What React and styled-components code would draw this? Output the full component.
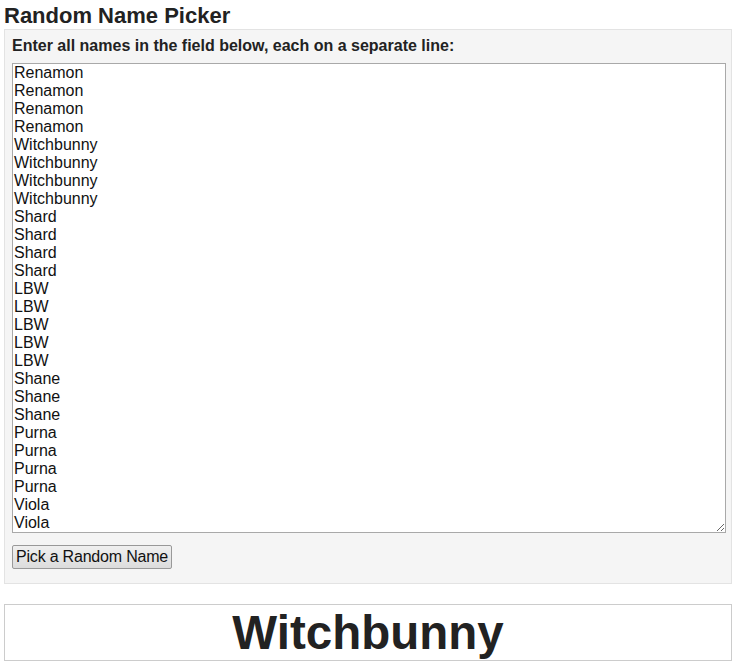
import React from 'react';
import styled, { createGlobalStyle } from 'styled-components';

const names = [
  'Renamon', 'Renamon', 'Renamon', 'Renamon',
  'Witchbunny', 'Witchbunny', 'Witchbunny', 'Witchbunny',
  'Shard', 'Shard', 'Shard', 'Shard',
  'LBW', 'LBW', 'LBW', 'LBW', 'LBW',
  'Shane', 'Shane', 'Shane',
  'Purna', 'Purna', 'Purna', 'Purna',
  'Viola', 'Viola'
];

const Global = createGlobalStyle`
  body {
    margin: 0 4px;
    background: #fff;
    color: #222;
    font-family: "Liberation Sans", Arial, sans-serif;
  }
`;

const Title = styled.h2`
  font-size: 22px;
  font-weight: bold;
  line-height: 25px;
  margin: 3px 0 1px;
`;

const Panel = styled.div`
  background: #f5f5f5;
  border: 1px solid #e3e3e3;
  padding: 7px 7px 14px;
`;

const Label = styled.label`
  display: block;
  font-size: 16px;
  font-weight: bold;
  line-height: 18px;
  margin-bottom: 8px;
`;

const Names = styled.textarea`
  display: block;
  box-sizing: border-box;
  width: calc(100% + 2px);
  height: 470px;
  margin: 0;
  padding: 0 1px;
  border: 1px solid #a9a9a9;
  background: #fff;
  color: #111;
  font-family: "Liberation Sans", Arial, sans-serif;
  font-size: 16px;
  line-height: 18px;
  overflow: hidden;
  resize: both;
  outline: none;
`;

const PickButton = styled.button`
  display: block;
  margin-top: 12px;
  height: 24px;
  padding: 1px 3px;
  font-family: "Liberation Sans", Arial, sans-serif;
  font-size: 16px;
  letter-spacing: -0.2px;
  color: #111;
  background: linear-gradient(#f0f0f0, #dcdcdc);
  border: 1px solid #999;
  border-radius: 2px;
`;

const Result = styled.div`
  margin-top: 20px;
  border: 1px solid #ccc;
  text-align: center;
  font-size: 47.5px;
  font-weight: bold;
  line-height: 55px;
  color: #222;
`;

export default function App() {
  return (
    <>
      <Global />
      <Title>Random Name Picker</Title>
      <Panel>
        <Label htmlFor="names">Enter all names in the field below, each on a separate line:</Label>
        <Names id="names" defaultValue={names.join('\n')} spellCheck={false} />
        <PickButton>Pick a Random Name</PickButton>
      </Panel>
      <Result>Witchbunny</Result>
    </>
  );
}
